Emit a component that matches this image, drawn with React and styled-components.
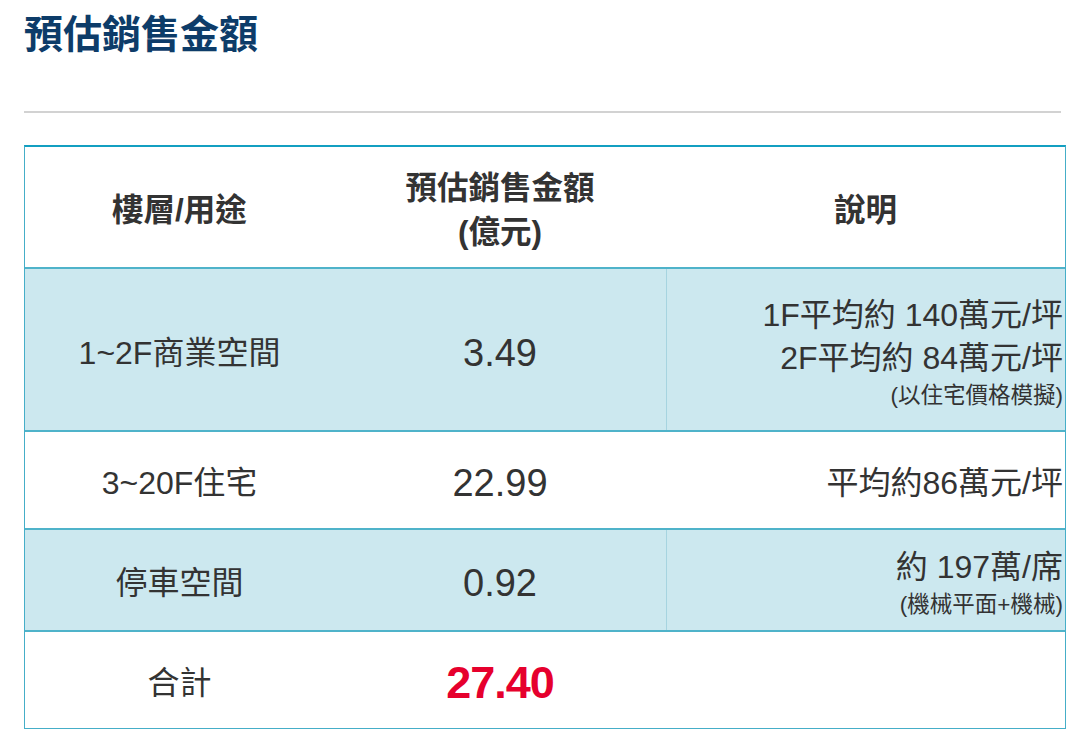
import React from "react";
import styled, { createGlobalStyle } from "styled-components";

const Global = createGlobalStyle`
  body {
    margin: 0;
    background: #fff;
    font-family: "Liberation Sans", "Noto Sans CJK TC", sans-serif;
    color: #333;
  }
`;

const Page = styled.div`
  padding: 9px 17px 0 24px;
`;

const Title = styled.h1`
  margin: 0;
  font-size: 39px;
  line-height: 52px;
  font-weight: 700;
  color: #0d3c69;
`;

const Rule = styled.div`
  margin: 50px 5px 0 0;
  height: 2px;
  background: #d2d2d2;
`;

const Table = styled.div`
  margin-top: 32px;
  border: 1px solid #45aec8;
  border-top: 2px solid #139fc1;
`;

const Row = styled.div`
  display: grid;
  grid-template-columns: 309px 332px 1fr;
  height: ${(p) => p.h}px;
  background: ${(p) => (p.shade ? "#cce8ef" : "#fff")};
  border-top: ${(p) => (p.first ? "none" : "2px solid #4fb3ca")};
`;

const Cell = styled.div`
  display: flex;
  flex-direction: column;
  justify-content: center;
  align-items: ${(p) => (p.right ? "flex-end" : "center")};
  text-align: ${(p) => (p.right ? "right" : "center")};
  padding: 6px ${(p) => (p.right ? "2px" : "0")} 0 0;
  border-left: ${(p) => (p.divider ? "1px solid #a6d4e0" : "none")};
`;

const Head = styled.div`
  font-size: 31.5px;
  font-weight: 700;
  line-height: 44px;
  color: #333;
`;

const Label = styled.div`
  font-size: 32px;
  line-height: 40px;
`;

const Num = styled.div`
  font-size: 38px;
  line-height: 44px;
`;

const Total = styled.div`
  font-size: 45px;
  font-weight: 700;
  line-height: 50px;
  color: #e6002d;
  letter-spacing: -1px;
`;

const Note = styled.div`
  font-size: 32px;
  line-height: 43px;
`;

const Small = styled.div`
  font-size: 22.5px;
  line-height: 32px;
`;

const rows = [
  {
    label: "1~2F商業空間",
    value: "3.49",
    h: 161,
    shade: true,
    notes: ["1F平均約 140萬元/坪", "2F平均約 84萬元/坪"],
    small: "(以住宅價格模擬)",
  },
  { label: "3~20F住宅", value: "22.99", h: 96, notes: ["平均約86萬元/坪"] },
  {
    label: "停車空間",
    value: "0.92",
    h: 100,
    shade: true,
    notes: ["約 197萬/席"],
    small: "(機械平面+機械)",
  },
];

export default function App() {
  return (
    <Page>
      <Global />
      <Title>預估銷售金額</Title>
      <Rule />
      <Table>
        <Row h={120} first>
          <Cell>
            <Head>樓層/用途</Head>
          </Cell>
          <Cell>
            <Head>預估銷售金額</Head>
            <Head>(億元)</Head>
          </Cell>
          <Cell>
            <Head>說明</Head>
          </Cell>
        </Row>
        {rows.map((r) => (
          <Row key={r.label} h={r.h} shade={r.shade}>
            <Cell>
              <Label>{r.label}</Label>
            </Cell>
            <Cell>
              <Num>{r.value}</Num>
            </Cell>
            <Cell right divider={r.shade}>
              {r.notes.map((n) => (
                <Note key={n}>{n}</Note>
              ))}
              {r.small && <Small>{r.small}</Small>}
            </Cell>
          </Row>
        ))}
        <Row h={96}>
          <Cell>
            <Label>合計</Label>
          </Cell>
          <Cell>
            <Total>27.40</Total>
          </Cell>
          <Cell />
        </Row>
      </Table>
    </Page>
  );
}
